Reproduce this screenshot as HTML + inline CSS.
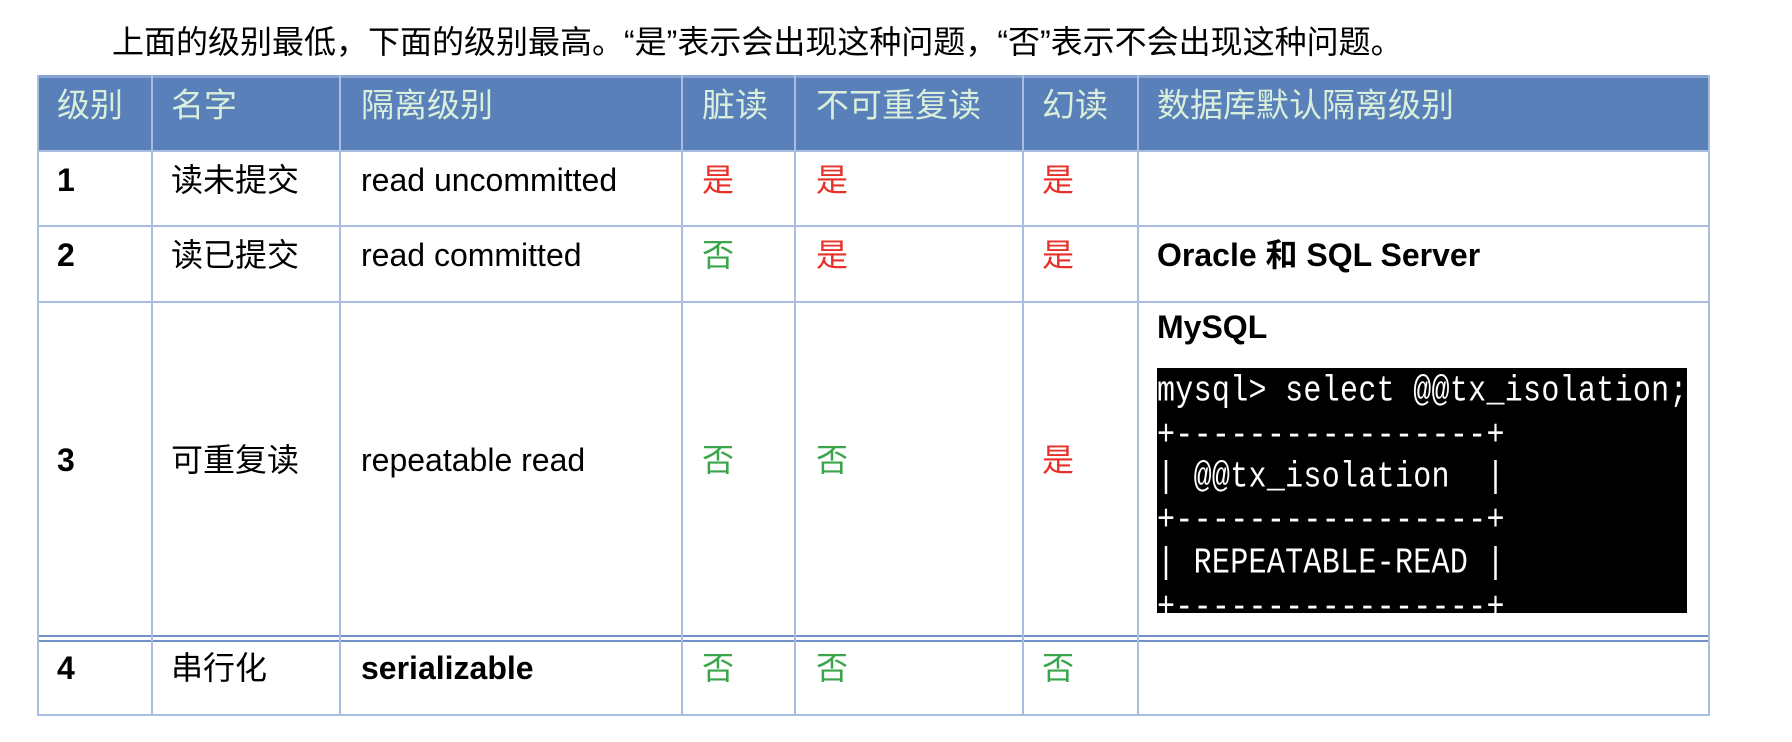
<!DOCTYPE html>
<html><head><meta charset="utf-8"><style>
html,body{margin:0;padding:0;background:#fff;width:1792px;height:742px;overflow:hidden;position:relative;font-family:"Liberation Sans","Noto Sans CJK SC",sans-serif;}
.t{position:absolute;white-space:nowrap;line-height:1;transform:translateY(-50%);font-size:32px;color:#000}
.h{color:#d9efdc;font-size:33px}
.b{font-weight:bold}
.r{color:#e8302a}.g{color:#3aa54a}
.vl{position:absolute;width:2px;background:#a8bde0}
.hl{position:absolute;height:2px;background:#a8bde0;left:37px;width:1673px}
.m{position:absolute;font-family:"Liberation Mono",monospace;color:#fff;font-size:30px;letter-spacing:0.3px;line-height:1;transform:translateY(-50%) scaleY(1.2);white-space:pre;left:0}
</style></head><body>
<div class="t" style="left:112px;top:42px;font-size:32px">上面的级别最低，下面的级别最高。“是”表示会出现这种问题，“否”表示不会出现这种问题。</div>
<div style="position:absolute;left:37px;top:75px;width:1673px;height:76px;background:#5a80ba"></div>
<div style="position:absolute;left:37px;top:75px;width:1673px;height:3px;background:#86a3d3"></div>
<div class="hl" style="top:150px"></div>
<div class="hl" style="top:225px"></div>
<div class="hl" style="top:301px"></div>
<div class="hl" style="top:635px;background:#6f91c8"></div>
<div class="hl" style="top:640px;background:#6f91c8"></div>
<div class="hl" style="top:714px"></div>
<div class="vl" style="left:37px;top:75px;height:641px"></div>
<div class="vl" style="left:151px;top:75px;height:641px"></div>
<div class="vl" style="left:339px;top:75px;height:641px"></div>
<div class="vl" style="left:681px;top:75px;height:641px"></div>
<div class="vl" style="left:794px;top:75px;height:641px"></div>
<div class="vl" style="left:1022px;top:75px;height:641px"></div>
<div class="vl" style="left:1137px;top:75px;height:641px"></div>
<div class="vl" style="left:1708px;top:75px;height:641px"></div>

<div class="t h" style="left:57px;top:105px">级别</div>
<div class="t h" style="left:171px;top:105px">名字</div>
<div class="t h" style="left:361px;top:105px">隔离级别</div>
<div class="t h" style="left:702px;top:105px">脏读</div>
<div class="t h" style="left:816px;top:105px">不可重复读</div>
<div class="t h" style="left:1042px;top:105px">幻读</div>
<div class="t h" style="left:1157px;top:105px">数据库默认隔离级别</div>

<div class="t b" style="left:57px;top:180px">1</div>
<div class="t" style="left:171px;top:180px">读未提交</div>
<div class="t" style="left:361px;top:180px">read uncommitted</div>
<div class="t r" style="left:702px;top:180px">是</div>
<div class="t r" style="left:816px;top:180px">是</div>
<div class="t r" style="left:1042px;top:180px">是</div>

<div class="t b" style="left:57px;top:255px">2</div>
<div class="t" style="left:171px;top:255px">读已提交</div>
<div class="t" style="left:361px;top:255px">read committed</div>
<div class="t g" style="left:702px;top:255px">否</div>
<div class="t r" style="left:816px;top:255px">是</div>
<div class="t r" style="left:1042px;top:255px">是</div>
<div class="t b" style="left:1157px;top:255px">Oracle 和 SQL Server</div>

<div class="t b" style="left:57px;top:460px">3</div>
<div class="t" style="left:171px;top:460px">可重复读</div>
<div class="t" style="left:361px;top:460px">repeatable read</div>
<div class="t g" style="left:702px;top:460px">否</div>
<div class="t g" style="left:816px;top:460px">否</div>
<div class="t r" style="left:1042px;top:460px">是</div>
<div class="t b" style="left:1157px;top:327px">MySQL</div>
<div style="position:absolute;left:1157px;top:368px;width:530px;height:245px;background:#000;overflow:hidden">
<div class="m" style="top:24px">mysql&gt; select @@tx_isolation;</div>
<div class="m" style="top:68px">+-----------------+</div>
<div class="m" style="top:110px">| @@tx_isolation  |</div>
<div class="m" style="top:153px">+-----------------+</div>
<div class="m" style="top:196px">| REPEATABLE-READ |</div>
<div class="m" style="top:240px">+-----------------+</div>
</div>

<div class="t b" style="left:57px;top:668px">4</div>
<div class="t" style="left:171px;top:668px">串行化</div>
<div class="t b" style="left:361px;top:668px">serializable</div>
<div class="t g" style="left:702px;top:668px">否</div>
<div class="t g" style="left:816px;top:668px">否</div>
<div class="t g" style="left:1042px;top:668px">否</div>
</body></html>
